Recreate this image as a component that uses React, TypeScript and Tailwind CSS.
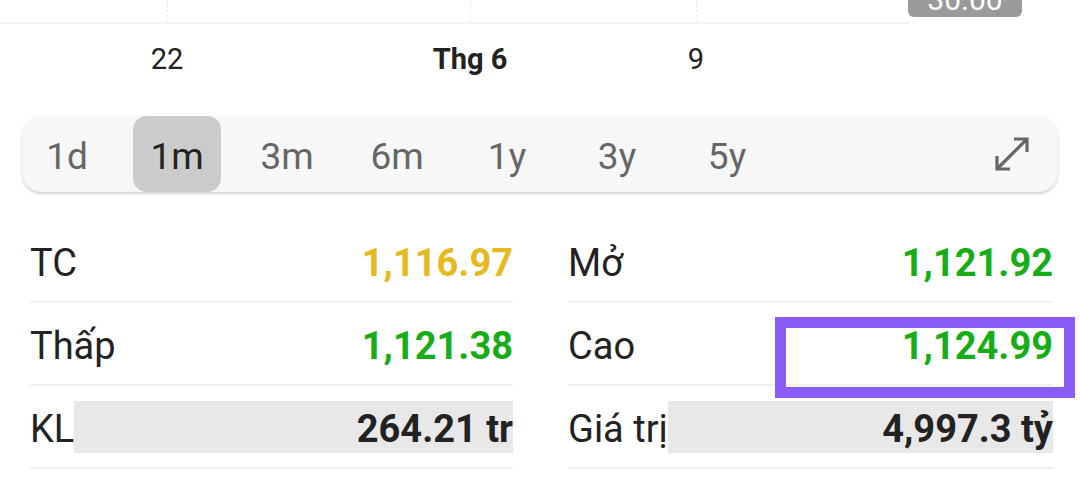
import React from "react";

const tabs = ["1d", "1m", "3m", "6m", "1y", "3y", "5y"];

const ExpandIcon: React.FC = () => (
  <svg width="40" height="40" viewBox="0 0 40 40" fill="none" stroke="#666666" strokeWidth="3.2" strokeLinecap="butt">
    <line x1="5" y1="35" x2="35" y2="5" />
    <polyline points="22,5 35,5 35,18" />
    <polyline points="5,22 5,35 18,35" />
  </svg>
);

type Stat = { label: string; value: string; color: string; bar?: boolean };

const left: Stat[] = [
  { label: "TC", value: "1,116.97", color: "text-[#e6b91e]" },
  { label: "Thấp", value: "1,121.38", color: "text-[#17ad17]" },
  { label: "KL", value: "264.21 tr", color: "text-[#222222]", bar: true },
];

const right: Stat[] = [
  { label: "Mở", value: "1,121.92", color: "text-[#17ad17]" },
  { label: "Cao", value: "1,124.99", color: "text-[#17ad17]" },
  { label: "Giá trị", value: "4,997.3 tỷ", color: "text-[#222222]", bar: true },
];

const StatColumn: React.FC<{ rows: Stat[] }> = ({ rows }) => (
  <div className="flex flex-col">
    {rows.map((r) => (
      <div key={r.label} className="flex items-center h-[83px] border-b-2 border-[#f0f0f0]">
        <div className="text-[38px] text-[#222222] leading-none whitespace-nowrap pt-[5px]">{r.label}</div>
        {r.bar ? (
          <div className="flex-1 h-[52px] bg-[#e8e8e8] flex items-center justify-end pt-[5px]">
            <span className={`text-[38px] font-bold leading-none ${r.color}`}>{r.value}</span>
          </div>
        ) : (
          <div className={`flex-1 text-right text-[38px] font-bold leading-none pt-[5px] ${r.color}`}>{r.value}</div>
        )}
      </div>
    ))}
  </div>
);

export default function App() {
  return (
    <div className="w-[1080px] h-[503px] bg-white overflow-hidden relative" style={{ fontFamily: "Roboto, 'Noto Sans', sans-serif" }}>
      {/* chart tail */}
      <div className="relative h-[24px] w-[909px] border-b-2 border-[#f2f2f2]">
        <div className="absolute left-[167px] top-0 h-full border-l border-dashed border-[#ececec]" />
        <div className="absolute left-[470px] top-0 h-full border-l border-dashed border-[#ececec]" />
        <div className="absolute left-[696px] top-0 h-full border-l border-dashed border-[#ececec]" />
      </div>
      <div className="absolute left-[908px] top-[-22px] w-[114px] h-[39px] bg-[#9a9a9a] rounded-b-[6px] flex items-end justify-center text-white text-[30px] leading-none pb-[2px]">
        30.00
      </div>

      {/* axis labels */}
      <div className="relative h-[70px] text-[29px] text-[#222222]">
        <span className="absolute left-[167px] top-[14px] -translate-x-1/2">22</span>
        <span className="absolute left-[470px] top-[14px] -translate-x-1/2 font-bold">Thg 6</span>
        <span className="absolute left-[696px] top-[14px] -translate-x-1/2">9</span>
      </div>

      {/* range selector */}
      <div className="mx-[22px] mt-[22px] h-[76px] rounded-[20px] bg-[#f7f7f7] shadow-[0_2px_3px_rgba(0,0,0,0.18)] flex items-center pl-[1px] pr-[26px]">
        <div className="flex gap-[22px] flex-1">
          {tabs.map((t) => (
            <div
              key={t}
              className={`w-[88px] h-[76px] flex items-center justify-center rounded-[14px] text-[37px] pt-[5px] ${
                t === "1m" ? "bg-[#cbcbcb] text-[#222222]" : "text-[#666666]"
              }`}
            >
              {t}
            </div>
          ))}
        </div>
        <ExpandIcon />
      </div>

      {/* stats */}
      <div className="grid grid-cols-[483px_485px] gap-x-[55px] ml-[30px] mt-[28px]">
        <StatColumn rows={left} />
        <StatColumn rows={right} />
      </div>

      {/* highlight annotation */}
      <div className="absolute left-[775px] top-[317px] w-[300px] h-[81px] border-[11px] border-[#8a5cf6]" />
    </div>
  );
}
